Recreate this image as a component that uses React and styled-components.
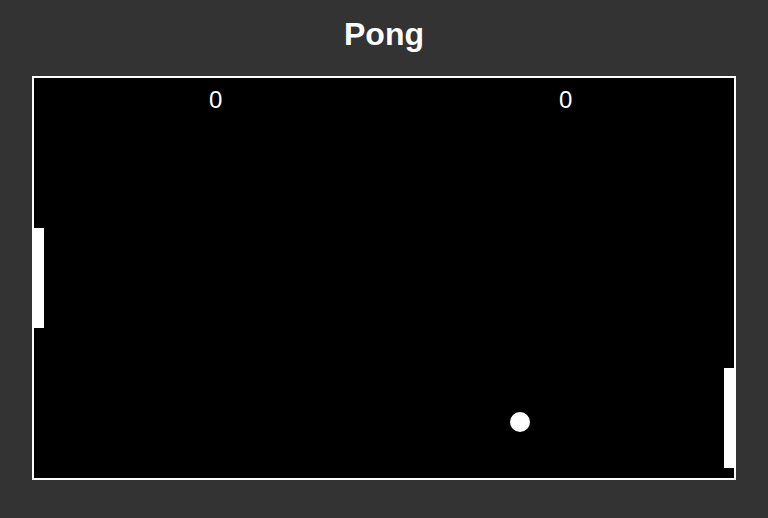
import React from 'react';
import styled, { createGlobalStyle } from 'styled-components';

const GlobalStyle = createGlobalStyle`
  html, body {
    margin: 0;
    padding: 0;
    background-color: #333333;
    font-family: "Liberation Sans", Arial, sans-serif;
  }
`;

const Page = styled.div`
  display: flex;
  flex-direction: column;
  align-items: center;
  padding-top: 16px;
  min-height: 518px;
  box-sizing: border-box;
`;

const Title = styled.h1`
  margin: 0 0 23px;
  font-size: 32px;
  line-height: 37px;
  font-weight: bold;
  color: #ffffff;
`;

const Board = styled.div`
  position: relative;
  width: 700px;
  height: 400px;
  background-color: #000000;
  border: 2px solid #ffffff;
  overflow: hidden;
`;

const Score = styled.div`
  position: absolute;
  top: 10px;
  left: ${p => p.x}px;
  font-size: 24px;
  line-height: 24px;
  color: #ffffff;
`;

const Paddle = styled.div`
  position: absolute;
  width: 10px;
  height: 100px;
  background-color: #ffffff;
`;

const Ball = styled.div`
  position: absolute;
  width: 20px;
  height: 20px;
  border-radius: 50%;
  background-color: #ffffff;
`;

const game = {
  scores: [0, 0],
  left: { x: 0, y: 150 },
  right: { x: 690, y: 290 },
  ball: { x: 486, y: 344 },
};

export default function App() {
  const { scores, left, right, ball } = game;
  return (
    <>
      <GlobalStyle />
      <Page>
        <Title>Pong</Title>
        <Board>
          <Score x={175}>{scores[0]}</Score>
          <Score x={525}>{scores[1]}</Score>
          <Paddle style={{ left: left.x, top: left.y }} />
          <Paddle style={{ left: right.x, top: right.y }} />
          <Ball style={{ left: ball.x - 10, top: ball.y - 10 }} />
        </Board>
      </Page>
    </>
  );
}
